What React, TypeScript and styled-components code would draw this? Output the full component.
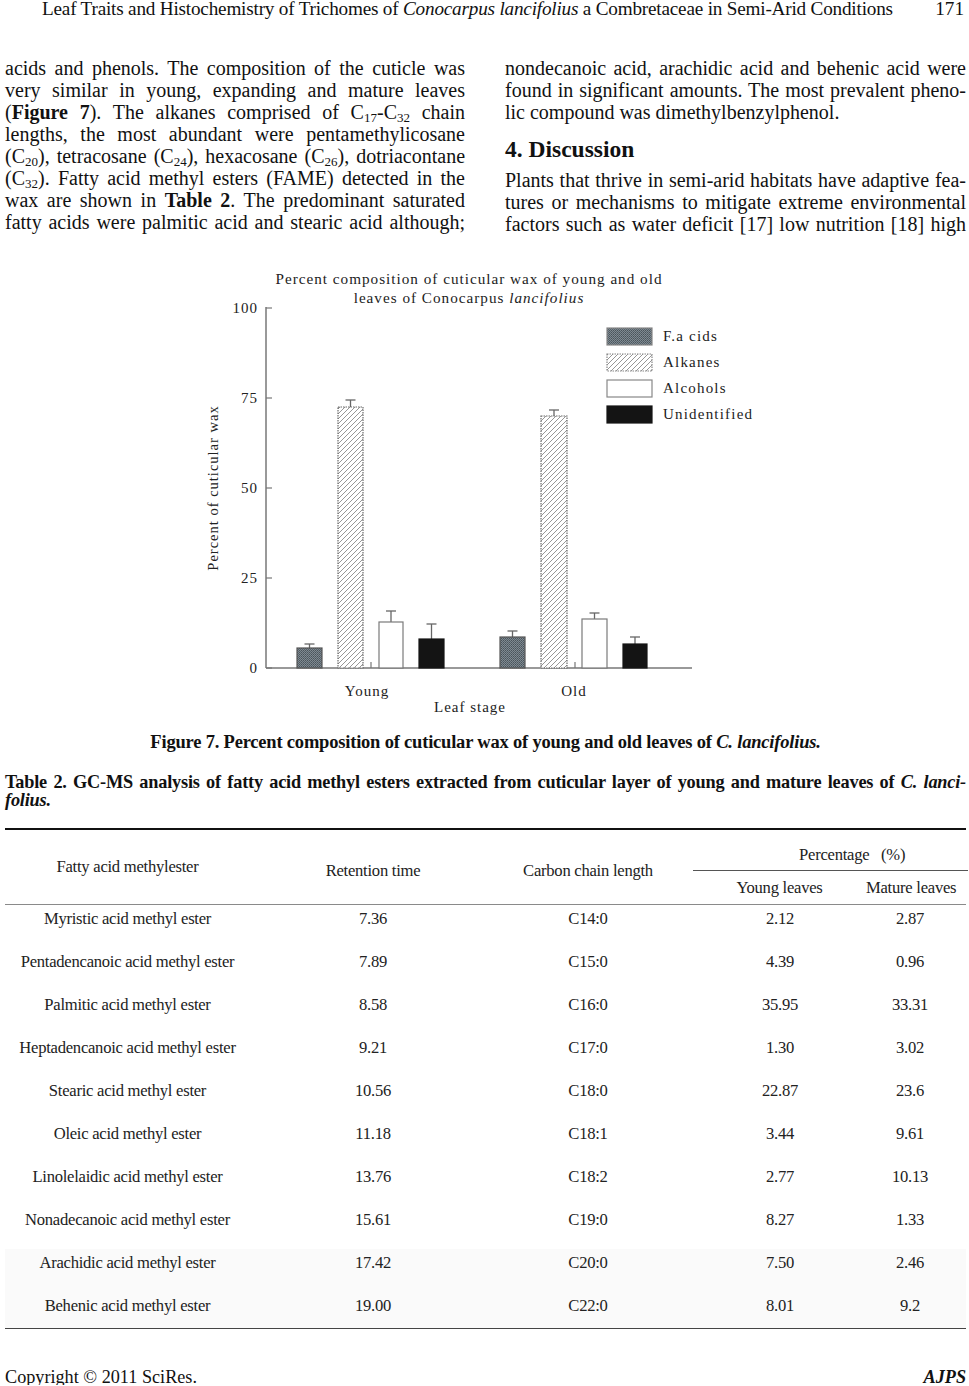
import React from "react";
import styled, { createGlobalStyle } from "styled-components";

const Global = createGlobalStyle`
  html, body { margin: 0; padding: 0; background: #ffffff; }
  body { font-family: "Liberation Serif", "Times New Roman", serif; color: #111; }
`;

const Page = styled.div`
  width: 969px;
  box-sizing: border-box;
  padding: 0 3px 0 5px;
`;

const RunningHead = styled.header`
  display: flex;
  justify-content: space-between;
  align-items: center;
  height: 18px;
  line-height: 18px;
  font-size: 19.2px;
  padding: 0 2px 0 37px;
  white-space: nowrap;
`;

const HeadTitle = styled.span`
  letter-spacing: -0.2px;
`;

const Columns = styled.div`
  display: grid;
  grid-template-columns: 460px 461px;
  column-gap: 40px;
  margin-top: 39px;
  font-size: 20px;
`;

const Column = styled.div`
  display: flex;
  flex-direction: column;
`;

const Line = styled.div<{ $last?: boolean }>`
  height: 22px;
  line-height: 22px;
  text-align: justify;
  text-align-last: ${(p) => (p.$last ? "left" : "justify")};
  white-space: nowrap;
`;

const Sub = styled.sub`
  font-size: 13px;
  vertical-align: baseline;
  position: relative;
  top: 3px;
  line-height: 0;
`;

const Heading = styled.h2`
  margin: 12px 0 6px;
  height: 28px;
  line-height: 28px;
  font-size: 23.5px;
  font-weight: bold;
`;

const FigureWrap = styled.figure`
  margin: 27px 0 0 190px;
  width: 600px;
  height: 460px;
`;

const FigCaption = styled.div`
  margin-top: 10px;
  height: 20px;
  line-height: 20px;
  text-align: center;
  font-weight: bold;
  font-size: 18.5px;
  letter-spacing: -0.2px;
  white-space: nowrap;
`;

const TableCaption = styled.div`
  margin-top: 21px;
  font-weight: bold;
  font-size: 18.3px;
  letter-spacing: -0.2px;
`;

const CapLine = styled.div<{ $last?: boolean }>`
  height: 18px;
  line-height: 18px;
  text-align: justify;
  text-align-last: ${(p) => (p.$last ? "left" : "justify")};
  white-space: nowrap;
`;

const Table = styled.div`
  margin-top: 19px;
  border-top: 2px solid #111;
  border-bottom: 1.5px solid #444;
  font-size: 16.6px;
  letter-spacing: -0.25px;
  color: #222;
  white-space: nowrap;
`;

const HeadGrid = styled.div`
  display: grid;
  grid-template-columns: 245px 246px 184px 13px 173px 1fr;
  grid-template-rows: 41px 33px;
  border-bottom: 1px solid #8a8a8a;
  height: 74px;
`;

const HeadCell = styled.div<{ $col: string; $pt?: number }>`
  grid-column: ${(p) => p.$col};
  grid-row: 1 / 3;
  display: flex;
  align-items: center;
  justify-content: center;
  padding-top: ${(p) => p.$pt ?? 0}px;
`;

const PercentHead = styled.div`
  grid-column: 5 / 7;
  grid-row: 1;
  display: flex;
  align-items: center;
  justify-content: center;
  padding-left: 43px;
  padding-top: 10px;
  border-bottom: 1px solid #555;
  box-sizing: border-box;
`;

const SubHead = styled.div<{ $col: string; $pr?: number }>`
  grid-column: ${(p) => p.$col};
  grid-row: 2;
  display: flex;
  align-items: center;
  justify-content: center;
  padding-right: ${(p) => p.$pr ?? 0}px;
`;

const Row = styled.div<{ $shade?: boolean; $h: number }>`
  display: grid;
  grid-template-columns: 245px 246px 184px 200px 1fr;
  height: ${(p) => p.$h}px;
  background: ${(p) => (p.$shade ? "#fafafa" : "transparent")};
`;

const Cell = styled.div<{ $pr?: number }>`
  text-align: center;
  padding-top: 5px;
  line-height: 18px;
  padding-right: ${(p) => p.$pr ?? 0}px;
`;

const Footer = styled.footer`
  margin-top: 40px;
  display: flex;
  justify-content: space-between;
  height: 16px;
  line-height: 16px;
  font-size: 18.2px;
`;

const Journal = styled.span`
  font-weight: bold;
  font-style: italic;
`;

const rows = [
  ["Myristic acid methyl ester", "7.36", "C14:0", "2.12", "2.87"],
  ["Pentadencanoic acid methyl ester", "7.89", "C15:0", "4.39", "0.96"],
  ["Palmitic acid methyl ester", "8.58", "C16:0", "35.95", "33.31"],
  ["Heptadencanoic acid methyl ester", "9.21", "C17:0", "1.30", "3.02"],
  ["Stearic acid methyl ester", "10.56", "C18:0", "22.87", "23.6"],
  ["Oleic acid methyl ester", "11.18", "C18:1", "3.44", "9.61"],
  ["Linolelaidic acid methyl ester", "13.76", "C18:2", "2.77", "10.13"],
  ["Nonadecanoic acid methyl ester", "15.61", "C19:0", "8.27", "1.33"],
  ["Arachidic acid methyl ester", "17.42", "C20:0", "7.50", "2.46"],
  ["Behenic acid methyl ester", "19.00", "C22:0", "8.01", "9.2"],
];

type Bar = { x: number; w: number; top: number; err: number; kind: "f" | "a" | "c" | "u" };

const bars: Bar[] = [
  { x: 102, w: 25, top: 386, err: 382, kind: "f" },
  { x: 143, w: 25, top: 145, err: 138, kind: "a" },
  { x: 184, w: 24, top: 360, err: 349, kind: "c" },
  { x: 224, w: 25, top: 377, err: 362, kind: "u" },
  { x: 305, w: 25, top: 375, err: 369, kind: "f" },
  { x: 346, w: 26, top: 154, err: 148, kind: "a" },
  { x: 387, w: 25, top: 357, err: 351, kind: "c" },
  { x: 428, w: 24, top: 382, err: 375, kind: "u" },
];

const fillFor = (k: Bar["kind"]) =>
  k === "f" ? "url(#dots)" : k === "a" ? "url(#hatch)" : k === "c" ? "#ffffff" : "#141414";
const strokeFor = (k: Bar["kind"]) =>
  k === "f" ? "#555" : k === "a" ? "#6a6a6a" : k === "c" ? "#7a7a7a" : "#141414";

const AX = 71;
const BASE = 406;
const ticks = [
  { v: "100", y: 46 },
  { v: "75", y: 136 },
  { v: "50", y: 226 },
  { v: "25", y: 316 },
  { v: "0", y: 406 },
];

const legend = [
  { k: "f" as const, label: "F.a cids", y: 66 },
  { k: "a" as const, label: "Alkanes", y: 92 },
  { k: "c" as const, label: "Alcohols", y: 118 },
  { k: "u" as const, label: "Unidentified", y: 144 },
];

const Chart = () => (
  <svg width="600" height="460" viewBox="0 0 600 460" fontFamily="'Liberation Serif', serif" fill="#222">
    <defs>
      <pattern id="dots" width="2" height="2" patternUnits="userSpaceOnUse">
        <rect width="2" height="2" fill="#7f8a91" />
        <rect width="1" height="1" fill="#4a545b" />
        <rect x="1" y="1" width="1" height="1" fill="#56616a" />
      </pattern>
      <pattern id="hatch" width="5" height="5" patternUnits="userSpaceOnUse">
        <rect width="5" height="5" fill="#fff" />
        <path d="M-1,1 L1,-1 M0,5 L5,0 M4,6 L6,4" stroke="#8a8a8a" strokeWidth="0.9" />
      </pattern>
    </defs>
    <text x="274" y="22" fontSize="15.2" letterSpacing="1" textAnchor="middle">
      Percent composition of cuticular wax of young and old
    </text>
    <text x="274" y="41" fontSize="15.2" letterSpacing="1" textAnchor="middle">
      leaves of Conocarpus <tspan fontStyle="italic">lancifolius</tspan>
    </text>
    <line x1={AX} y1="45" x2={AX} y2={BASE} stroke="#777" strokeWidth="1.5" />
    <line x1={AX} y1={BASE} x2="497" y2={BASE} stroke="#777" strokeWidth="1.5" />
    {ticks.map((t) => (
      <g key={t.v}>
        <line x1={AX} y1={t.y} x2={AX + 6} y2={t.y} stroke="#777" strokeWidth="1.2" />
        <text x="63" y={t.y + 5} fontSize="15" letterSpacing="1" textAnchor="end">
          {t.v}
        </text>
      </g>
    ))}
    <text transform="translate(23 226) rotate(-90)" fontSize="14.5" letterSpacing="1" textAnchor="middle">
      Percent  of cuticular wax
    </text>
    {bars.map((b, i) => {
      const cx = b.x + b.w / 2;
      return (
        <g key={i}>
          <line x1={cx} y1={b.top} x2={cx} y2={b.err} stroke="#666" strokeWidth="1.3" />
          <line x1={cx - 5} y1={b.err} x2={cx + 5} y2={b.err} stroke="#666" strokeWidth="1.3" />
          <rect
            x={b.x}
            y={b.top}
            width={b.w}
            height={BASE - b.top}
            fill={fillFor(b.kind)}
            stroke={strokeFor(b.kind)}
            strokeWidth="1.2"
            strokeDasharray={b.kind === "a" ? "1.5 1" : undefined}
          />
        </g>
      );
    })}
    <line x1="176" y1="400" x2="176" y2={BASE} stroke="#777" strokeWidth="1.2" />
    <line x1="380" y1="400" x2="380" y2={BASE} stroke="#777" strokeWidth="1.2" />
    <text x="172" y="434" fontSize="15" letterSpacing="1" textAnchor="middle">Young</text>
    <text x="379" y="434" fontSize="15" letterSpacing="1" textAnchor="middle">Old</text>
    <text x="275" y="450" fontSize="15" letterSpacing="1" textAnchor="middle">Leaf stage</text>
    {legend.map((l) => (
      <g key={l.label}>
        <rect
          x="412"
          y={l.y}
          width="45"
          height="17"
          fill={fillFor(l.k)}
          stroke={l.k === "u" ? "#141414" : "#888"}
          strokeWidth="1.2"
          strokeDasharray={l.k === "a" ? "1.5 1" : undefined}
        />
        <text x="468" y={l.y + 13} fontSize="15" letterSpacing="1.2">
          {l.label}
        </text>
      </g>
    ))}
  </svg>
);

export default function App() {
  return (
    <>
      <Global />
      <Page>
        <RunningHead>
          <HeadTitle>
            Leaf Traits and Histochemistry of Trichomes of <i>Conocarpus lancifolius</i> a Combretaceae in Semi-Arid Conditions
          </HeadTitle>
          <span>171</span>
        </RunningHead>

        <Columns>
          <Column>
            <Line>acids and phenols. The composition of the cuticle was</Line>
            <Line>very similar in young, expanding and mature leaves</Line>
            <Line>
              (<b>Figure 7</b>). The alkanes comprised of C<Sub>17</Sub>-C<Sub>32</Sub> chain
            </Line>
            <Line>lengths, the most abundant were pentamethylicosane</Line>
            <Line>
              (C<Sub>20</Sub>), tetracosane (C<Sub>24</Sub>), hexacosane (C<Sub>26</Sub>), dotriacontane
            </Line>
            <Line>
              (C<Sub>32</Sub>). Fatty acid methyl esters (FAME) detected in the
            </Line>
            <Line>
              wax are shown in <b>Table 2</b>. The predominant saturated
            </Line>
            <Line>fatty acids were palmitic acid and stearic acid although;</Line>
          </Column>
          <Column>
            <Line>nondecanoic acid, arachidic acid and behenic acid were</Line>
            <Line>found in significant amounts. The most prevalent pheno-</Line>
            <Line $last>lic compound was dimethylbenzylphenol.</Line>
            <Heading>4. Discussion</Heading>
            <Line>Plants that thrive in semi-arid habitats have adaptive fea-</Line>
            <Line>tures or mechanisms to mitigate extreme environmental</Line>
            <Line>factors such as water deficit [17] low nutrition [18] high</Line>
          </Column>
        </Columns>

        <FigureWrap>
          <Chart />
        </FigureWrap>

        <FigCaption>
          Figure 7. Percent composition of cuticular wax of young and old leaves of <i>C. lancifolius.</i>
        </FigCaption>

        <TableCaption>
          <CapLine>
            Table 2. GC-MS analysis of fatty acid methyl esters extracted from cuticular layer of young and mature leaves of <i>C. lanci-</i>
          </CapLine>
          <CapLine $last>
            <i>folius.</i>
          </CapLine>
        </TableCaption>

        <Table>
          <HeadGrid>
            <HeadCell $col="1">Fatty acid methylester</HeadCell>
            <HeadCell $col="2" $pt={8}>Retention time</HeadCell>
            <HeadCell $col="3" $pt={8}>Carbon chain length</HeadCell>
            <PercentHead>Percentage&nbsp;&nbsp;&nbsp;(%)</PercentHead>
            <SubHead $col="5">Young leaves</SubHead>
            <SubHead $col="6" $pr={12}>Mature leaves</SubHead>
          </HeadGrid>
          {rows.map((r, i) => (
            <Row key={r[0]} $shade={i >= 8} $h={i === rows.length - 1 ? 36 : 43}>
              <Cell>{r[0]}</Cell>
              <Cell>{r[1]}</Cell>
              <Cell>{r[2]}</Cell>
              <Cell>{r[3]}</Cell>
              <Cell $pr={26}>{r[4]}</Cell>
            </Row>
          ))}
        </Table>

        <Footer>
          <span>Copyright © 2011 SciRes.</span>
          <Journal>AJPS</Journal>
        </Footer>
      </Page>
    </>
  );
}
